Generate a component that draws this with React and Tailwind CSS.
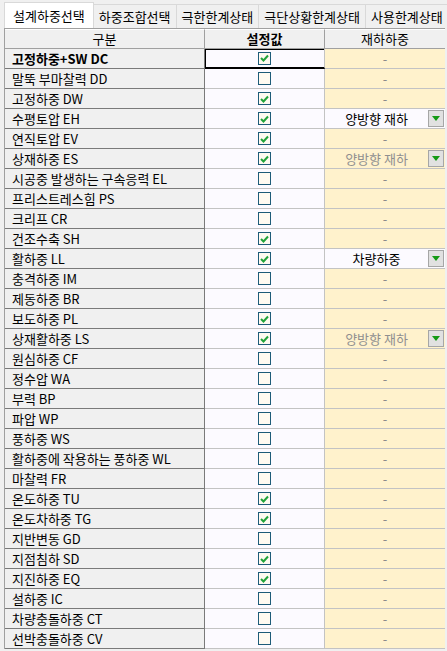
import { useState } from "react";

const tabs = ["설계하중선택", "하중조합선택", "극한한계상태", "극단상황한계상태", "사용한계상태"];

const rows = [
  { name: "고정하중+SW DC", on: true, bold: true },
  { name: "말뚝 부마찰력 DD", on: false },
  { name: "고정하중 DW", on: true },
  { name: "수평토압 EH", on: true, pick: "양방향 재하", active: true },
  { name: "연직토압 EV", on: true },
  { name: "상재하중 ES", on: true, pick: "양방향 재하" },
  { name: "시공중 발생하는 구속응력 EL", on: false },
  { name: "프리스트레스힘 PS", on: false },
  { name: "크리프 CR", on: false },
  { name: "건조수축 SH", on: true },
  { name: "활하중 LL", on: true, pick: "차량하중", active: true },
  { name: "충격하중 IM", on: false },
  { name: "제동하중 BR", on: false },
  { name: "보도하중 PL", on: true },
  { name: "상재활하중 LS", on: true, pick: "양방향 재하" },
  { name: "원심하중 CF", on: false },
  { name: "정수압 WA", on: false },
  { name: "부력 BP", on: false },
  { name: "파압 WP", on: false },
  { name: "풍하중 WS", on: false },
  { name: "활하중에 작용하는 풍하중 WL", on: false },
  { name: "마찰력 FR", on: false },
  { name: "온도하중 TU", on: true },
  { name: "온도차하중 TG", on: true },
  { name: "지반변동 GD", on: false },
  { name: "지점침하 SD", on: true },
  { name: "지진하중 EQ", on: true },
  { name: "설하중 IC", on: false },
  { name: "차량충돌하중 CT", on: false },
  { name: "선박충돌하중 CV", on: false },
];

function Check({ on }) {
  return (
    <span className="w-[13px] h-[13px] border border-[#1d5b78] bg-[#fffaf0] flex items-center justify-center">
      {on && (
        <svg width="9" height="8" viewBox="0 0 9 8">
          <path d="M1 4 L3.5 6.5 L8 1.5" stroke="#22a33a" strokeWidth="2" fill="none" />
        </svg>
      )}
    </span>
  );
}

function DropButton() {
  return (
    <span className="absolute right-[1px] top-[1px] w-[16px] h-[17px] bg-[#e1e1e1] border border-[#a6a6a6] flex items-center justify-center">
      <svg width="8" height="5" viewBox="0 0 8 5">
        <path d="M0 0 H8 L4 5 Z" fill="#139a13" />
      </svg>
    </span>
  );
}

export default function App() {
  const [data, setData] = useState(rows);

  const toggle = (i) => {
    setData(data.map((r, j) => (j === i ? { ...r, on: !r.on } : r)));
  };

  return (
    <div
      className="w-[447px] h-[651px] bg-[#f0f0f0] text-[13px] text-black overflow-hidden"
      style={{ fontFamily: '"Noto Sans CJK KR", "Noto Sans", sans-serif' }}
    >
      {/* tab strip */}
      <div className="flex h-[28px] pl-[4px] items-end whitespace-nowrap">
        {tabs.map((t, i) => (
          <div
            key={t}
            className={
              i === 0
                ? "h-[26px] px-[8px] bg-white border border-b-0 border-[#d9d9d9] flex items-center"
                : "h-[24px] px-[5px] bg-[#f0f0f0] border border-l-0 border-b-0 border-[#d9d9d9] flex items-center"
            }
          >
            {t}
          </div>
        ))}
      </div>

      {/* grid */}
      <div className="ml-[4px] mr-[2px] border-l border-t border-[#a0a0a0] bg-white">
        <div className="flex h-[20px] bg-[#f0f0f0] border-b border-[#a0a0a0]">
          <div className="w-[200px] border-r border-[#a0a0a0] flex items-center justify-center border-t border-t-white">
            구분
          </div>
          <div className="w-[120px] border-r border-[#a0a0a0] flex items-center justify-center font-bold border-t border-t-white">
            설정값
          </div>
          <div className="flex-1 flex items-center justify-center border-t border-t-white">재하하중</div>
        </div>

        {data.map((r, i) => (
          <div key={r.name} className="flex h-[20px]">
            <div
              className={
                "w-[200px] pl-[7px] bg-[#f0f0f0] border-b border-r border-[#7a7a7a] flex items-center whitespace-nowrap" +
                (r.bold ? " font-bold" : "")
              }
            >
              {r.name}
            </div>
            <div
              onClick={() => toggle(i)}
              className={
                "w-[120px] bg-[#fcfaff] border-r border-[#c3c3c3] flex items-center justify-center " +
                (i === 0 ? "border-b-2 border-b-black shadow-[inset_1px_1px_0_0_#000]" : "border-b border-b-[#c3c3c3]")
              }
            >
              <Check on={r.on} />
            </div>
            <div
              className={
                "flex-1 relative border-b border-[#c3c3c3] flex items-center " +
                (r.active ? "bg-[#fcfaff]" : "bg-[#fff2cc]")
              }
            >
              {r.pick ? (
                <>
                  <span className={"w-[103px] text-center " + (r.active ? "text-black" : "text-[#8f8f8f]")}>
                    {r.pick}
                  </span>
                  <DropButton />
                </>
              ) : (
                <span className="w-full text-center text-[#8a8a8a]">-</span>
              )}
            </div>
          </div>
        ))}
      </div>
    </div>
  );
}
